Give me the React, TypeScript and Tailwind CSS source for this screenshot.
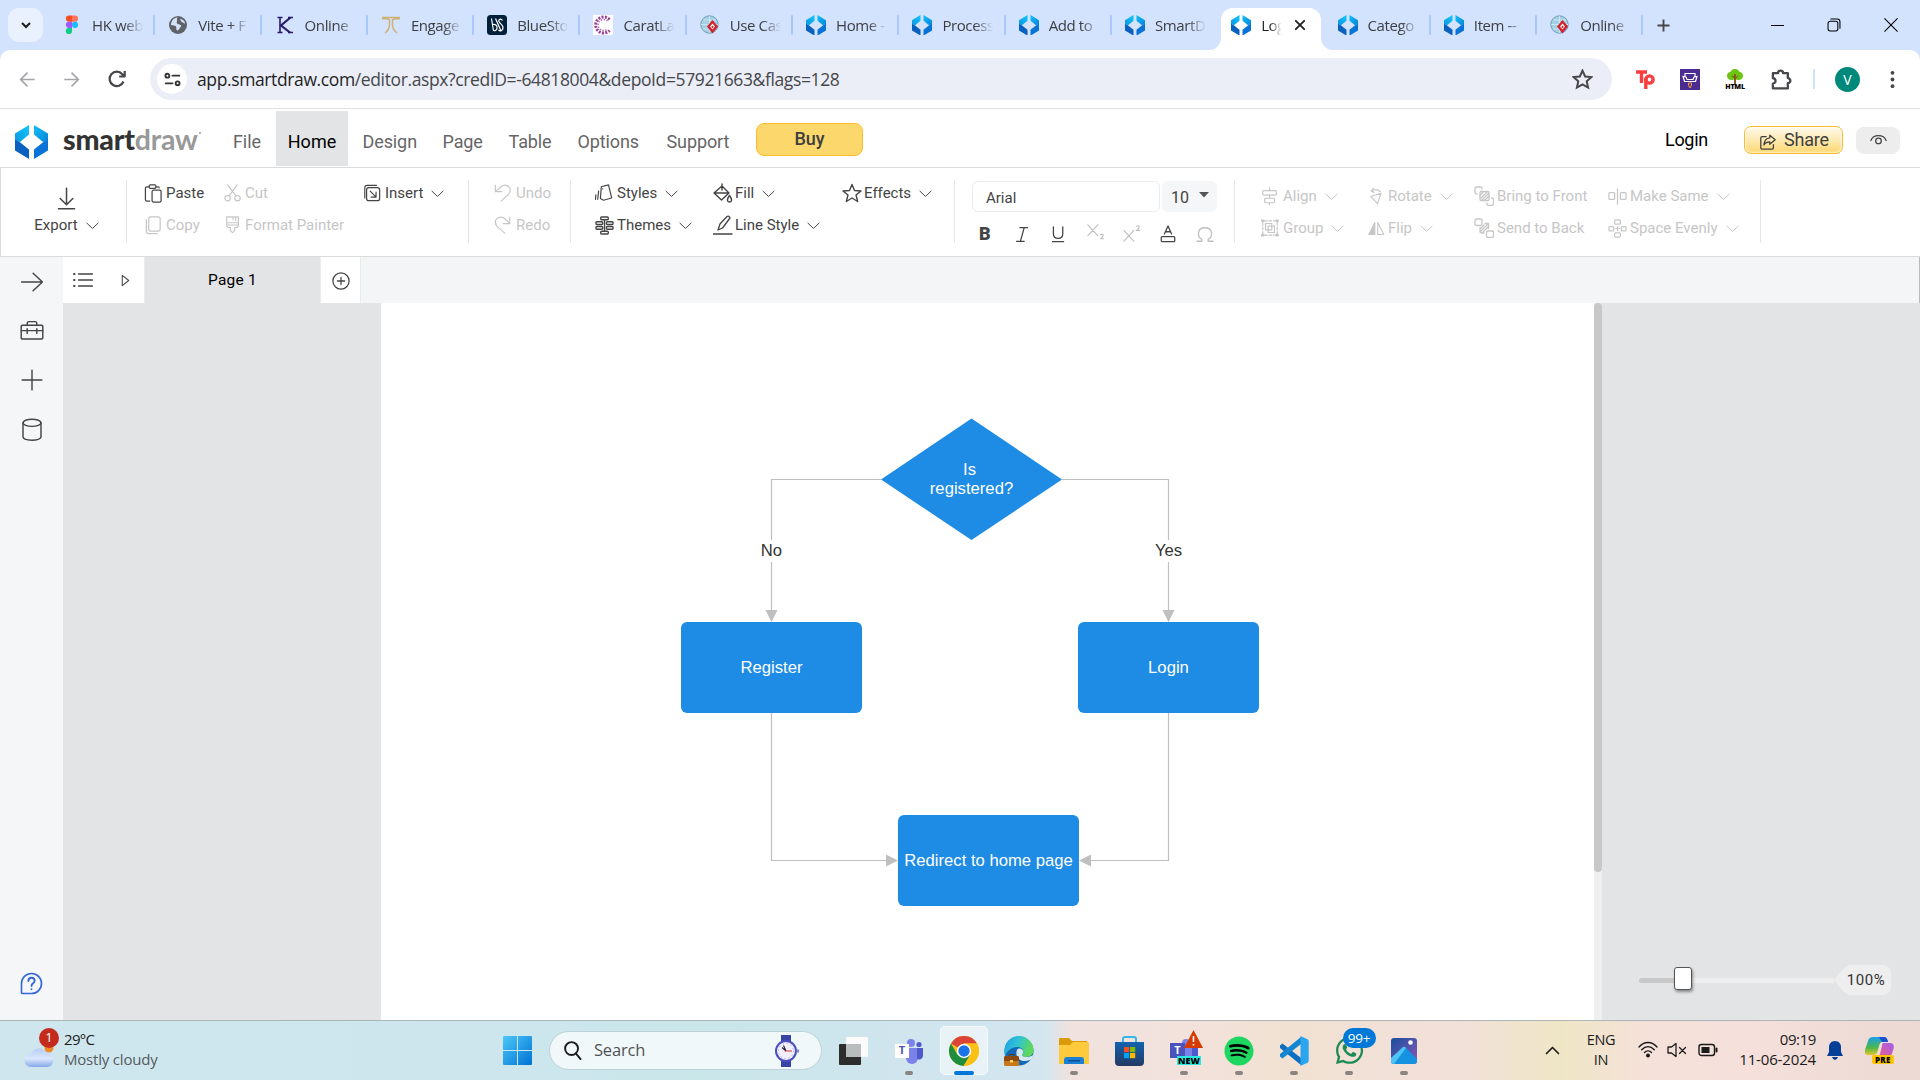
import React from "react";
import { FaWhatsapp, FaSpotify } from "react-icons/fa6";

type IconProps = { children?: React.ReactNode; s?: number; w?: number; sw?: number; className?: string };

/* Line icon drawn on a 20-unit grid */
function Line({ children, s = 20, w, sw = 1.3, className = "" }: IconProps) {
  return (
    <svg width={w ?? s} height={s} viewBox={`0 0 ${((w ?? s) / s) * 20} 20`} fill="none" stroke="currentColor" strokeWidth={sw} strokeLinecap="round" strokeLinejoin="round" className={`shrink-0 ${className}`}>
      {children}
    </svg>
  );
}

function SmartDrawMark({ s = 21 }: { s?: number }) {
  return (
    <svg width={s} height={(s * 34) / 33} viewBox="0 0 33 34" className="shrink-0">
      <defs>
        <linearGradient id="sdTop" x1="0" y1="1" x2="1" y2="0"><stop offset="0" stopColor="#0a95e0" /><stop offset="1" stopColor="#12c8fb" /></linearGradient>
        <linearGradient id="sdTopR" x1="0" y1="0" x2="1" y2="1"><stop offset="0" stopColor="#10c2fa" /><stop offset="1" stopColor="#0583d8" /></linearGradient>
      </defs>
      <path d="M0 14 L4 16.500 L14 24.500 V34 L0 25.500 Z" fill="#0960be" />
      <path d="M33 14 L29 16.500 L19 24.500 V34 L33 25.500 Z" fill="#0873d6" />
      <path d="M0 8.500 L14 0 V9.500 L5 17 L0 15 Z" fill="url(#sdTop)" />
      <path d="M33 8.500 L19 0 V9.500 L28 17 L33 15 Z" fill="url(#sdTopR)" />
    </svg>
  );
}

function Figma() {
  return (
    <svg width="20" height="20" viewBox="0 0 20 20">
      <path d="M10 0.5H7a3.1 3.1 0 0 0 0 6.2h3z" fill="#f24e1e" />
      <path d="M10 0.5h3a3.1 3.1 0 0 1 0 6.2h-3z" fill="#ff7262" />
      <path d="M10 6.7H7a3.1 3.1 0 0 0 0 6.2h3z" fill="#a259ff" />
      <circle cx="13" cy="9.8" r="3.1" fill="#1abcfe" />
      <path d="M7 12.9h3V16a3.1 3.1 0 1 1-3-3.1z" fill="#0acf83" />
    </svg>
  );
}
function Globe() {
  return (
    <svg width="20" height="20" viewBox="0 0 20 20">
      <circle cx="10" cy="10" r="9" fill="#5f6368" />
      <path d="M3 10c2 .5 4 .3 5 1.500.8 1-.3 2.500.7 3.500.8 1 2.300 0 2.800-1.500.4-1.400 2-1.500 1.500-3-.5-1.300-3-1-4-2C8 7.500 9.500 6 9 4.500 8.700 3.300 9 3 10 2.600 7 2.500 3 5 3 10z" fill="#d3e2fd" />
      <path d="M12 4c1 1 .5 2.500 2 3s2 1.500 3 1.800C17 6.500 15 4 12 4z" fill="#d3e2fd" />
    </svg>
  );
}
function KMark() {
  return (
    <svg width="20" height="20" viewBox="0 0 20 20" fill="none" stroke="#2a1a6e">
      <path d="M5 2.500v15M2.500 2.500h5M2.500 17.500h5" strokeWidth="1.600" />
      <path d="M15.500 2.500L6 10.500l9 7" strokeWidth="2.200" />
      <path d="M13 2.500h5M13 17.500h5" strokeWidth="1.500" />
    </svg>
  );
}
function Pillar() {
  return (
    <svg width="20" height="20" viewBox="0 0 20 20" fill="none" stroke="#cdb177" strokeWidth="1.500">
      <path d="M1 2.500h18M1 3.500c3 1 6-1 7.500 1.500v5c0 4-2 6-4.500 8M19 3.500c-3 1-6-1-7.500 1.500v5c0 4 2 6 4.500 8" />
    </svg>
  );
}
function BlueStone() {
  return (
    <svg width="20" height="20" viewBox="0 0 20 20">
      <rect width="20" height="20" rx="3.500" fill="#03203a" />
      <path d="M4.500 3.500l2 12.500M6 9.500c5-1 5.500 5.500 1 6.500M8.500 3.500L14 16M15.500 5.500c-1.500-2.500-4.500-1-3.500 1.200s4 3 4 6-3 4-4.500 2.300" fill="none" stroke="#fff" strokeWidth="1.200" />
    </svg>
  );
}
function CaratLane() {
  return (
    <svg width="20" height="20" viewBox="0 0 20 20">
      <rect width="20" height="20" fill="#fff" />
      <path d="M16.500 4.500A8 8 0 1 0 16.500 15.500" fill="none" stroke="#9b3f97" strokeWidth="3" strokeDasharray="2 1.300" />
      <path d="M14.500 6A5.500 5.500 0 1 0 14.500 14" fill="none" stroke="#b569b0" strokeWidth="1.500" strokeDasharray="1.300 1.500" />
    </svg>
  );
}
function Paradigm() {
  return (
    <svg width="20" height="20" viewBox="0 0 20 20">
      <circle cx="9.500" cy="9.500" r="8.700" fill="#a5cfe4" stroke="#6f9fba" />
      <path d="M9.500 1v17M1 9.500h17M3 5h13M3 14h13" stroke="#d4ebf5" strokeWidth=".8" fill="none" />
      <path d="M12.500 5l5.500 6.500-5.500 7-5.500-7z" fill="#d3222a" />
      <path d="M12.500 8.500l2.500 3-2.500 3-2.500-3z" fill="#fff" />
      <path d="M12.500 10.500l1.300 1.400-1.300 1.400-1.300-1.400z" fill="#d3222a" />
    </svg>
  );
}

const sd = <SmartDrawMark s={20} />;
const tabs: { icon: React.ReactNode; title: string; active?: boolean; last?: boolean }[] = [
  { icon: <Figma />, title: "HK web" },
  { icon: <Globe />, title: "Vite + F" },
  { icon: <KMark />, title: "Online" },
  { icon: <Pillar />, title: "Engage" },
  { icon: <BlueStone />, title: "BlueSto" },
  { icon: <CaratLane />, title: "CaratLa" },
  { icon: <Paradigm />, title: "Use Cas" },
  { icon: sd, title: "Home -" },
  { icon: sd, title: "Process" },
  { icon: sd, title: "Add to" },
  { icon: sd, title: "SmartD", last: true },
  { icon: sd, title: "Log", active: true },
  { icon: sd, title: "Catego" },
  { icon: sd, title: "Item --" },
  { icon: <Paradigm />, title: "Online" },
];

function TabStrip() {
  return (
    <div className="flex h-[50px] bg-[#d3e2fd] text-[#3c4043]">
      <div className="ml-2 mt-2 flex h-[34px] w-[35px] items-center justify-center rounded-[11px] bg-[#e9f0fe]">
        <Line s={16} sw={2.600} className="text-[#1f1f1f]"><path d="M5 7.500l5 5 5-5" strokeLinecap="butt" strokeLinejoin="miter" /></Line>
      </div>
      <div className="ml-[6px] flex">
        {tabs.map((t, i) =>
          t.active ? (
            <div key={i} className="relative flex w-[106.300px] items-center pt-2 text-[#1f1f1f]">
              <div className="absolute bottom-0 left-[3px] right-[4px] top-[8px] rounded-t-[12px] bg-white" />
              <svg className="absolute -left-[9px] bottom-0" width="12" height="12"><path d="M12 0v12H0A12 12 0 0 0 12 0z" fill="#fff" /></svg>
              <svg className="absolute -right-[8px] bottom-0" width="12" height="12"><path d="M0 0v12h12A12 12 0 0 1 0 0z" fill="#fff" /></svg>
              <div className="relative -mt-2 ml-[13px] flex items-center">
                {t.icon}
                <div className="ml-[10px] w-[23px] whitespace-nowrap text-[15px] tracking-[-0.600px] [mask-image:linear-gradient(to_right,black_40%,transparent_90%)]">{t.title}</div>
                <Line s={12} sw={3} className="ml-[10px]"><path d="M3 3l14 14M17 3L3 17" /></Line>
              </div>
            </div>
          ) : (
            <div key={i} className="flex w-[106.300px] items-center">
              <div className="ml-[13px] flex w-[20px] justify-center">{t.icon}</div>
              <div className="ml-[10px] w-[54px] whitespace-nowrap text-[15px] tracking-[-0.400px] [mask-image:linear-gradient(to_right,black_60%,transparent_95%)]">{t.title}</div>
              {!t.last && <div className="ml-auto h-5 w-[2px] rounded bg-[#a8c7fa]" />}
            </div>
          ),
        )}
      </div>
      <div className="flex w-[41px] items-center justify-center">
        <Line s={15} sw={2.500} className="text-[#45474a]"><path d="M10 2v16M2 10h16" strokeLinecap="butt" /></Line>
      </div>
      <div className="ml-auto mr-[22px] flex items-center gap-[43px] text-black">
        <div className="h-px w-[13px] bg-black" />
        <Line s={14} sw={1.500}><rect x="1.500" y="4.500" width="14" height="14" rx="3" /><path d="M5.500 1.500h9a4 4 0 0 1 4 4v9" /></Line>
        <Line s={14} sw={1.500}><path d="M1 1l18 18M19 1L1 19" /></Line>
      </div>
    </div>
  );
}

function AddressBar() {
  return (
    <div className="bg-[#d3e2fd]">
      <div className="flex h-[59px] items-center rounded-t-[10px] border-b border-[#dfe0e2] bg-white">
        <div className="flex w-[150px] items-center pl-[19px] text-[#a4a6a9]">
          <Line s={17} sw={2}><path d="M18.500 10H2M10 2L2 10l8 8" strokeLinecap="butt" strokeLinejoin="miter" /></Line>
          <Line s={17} sw={2} className="ml-[27px]"><path d="M1.500 10H18M10 2l8 8-8 8" strokeLinecap="butt" strokeLinejoin="miter" /></Line>
          <Line s={20} sw={2.200} className="ml-[27px] text-[#45474a]"><path d="M16.500 12.500A7.200 7.200 0 1 1 15.300 5.200l2 2M17.700 2v5.500h-5.500" strokeLinecap="butt" /></Line>
        </div>
        <div className="flex h-[42px] w-[1462px] items-center rounded-full bg-[#ebeef7] pl-[7px] pr-[19px]">
          <div className="flex h-[30px] w-[30px] items-center justify-center rounded-full bg-white">
            <Line s={17} sw={2.200} className="text-[#333]"><circle cx="4" cy="5.500" r="2.300" /><path d="M10 5.500h8M2 14.500h8" /><circle cx="16" cy="14.500" r="2.300" /></Line>
          </div>
          <div className="ml-[10px] whitespace-nowrap text-[17.500px] tracking-[-0.380px] text-[#45474b]">
            <span className="text-[#1f1f1f]">app.smartdraw.com</span>/editor.aspx?credID=-64818004&amp;depoId=57921663&amp;flags=128
          </div>
          <Line s={21} sw={1.900} className="ml-auto text-[#45474a]"><path d="M10 1.500l2.500 5.600 6 .6-4.500 4 1.300 6L10 14.600 4.700 17.700l1.300-6-4.500-4 6-.6z" strokeLinejoin="miter" /></Line>
        </div>
        <svg className="ml-[24px]" width="19" height="20" viewBox="0 0 19 20" fill="none" stroke="#f83f3f" strokeWidth="3.400">
          <path d="M0 3h11M5.500 3v11" /><circle cx="13.500" cy="10.500" r="3.600" /><path d="M9.800 9v11" />
        </svg>
        <svg className="ml-[25px]" width="20" height="21" viewBox="0 0 20 21"><rect width="20" height="21" fill="#4d2c91" /><path d="M5 8V4.500h10V8M3 7.500l1.500 5h11l1.500-5-3 .5-1 2.500H7L6 8z" fill="none" stroke="#fff" strokeWidth="1.200" /><path d="M8.500 14h3v2L10 19l-1.500-3z" fill="none" stroke="#e9a23b" /></svg>
        <div className="ml-[24px] flex w-[22px] flex-col items-center">
          <svg width="18" height="16" viewBox="0 0 18 16"><path d="M9 0c3 0 4 1.500 4.500 3C16 3 17 5 17 7c0 3-3 4.500-5.500 4L9 10l-2.500 1C4 11.500 1 10 1 7c0-2 1-4 3.500-4C5 1.500 6 0 9 0z" fill="#6cc611" /><path d="M8 16V9L5 7h3V5h2v3l3-2-3 4v6z" fill="#8a5a23" /></svg>
          <div className="-mt-px text-[7px] font-black leading-[6px] tracking-[-0.200px] text-black">HTML</div>
        </div>
        <Line s={23} sw={2} className="ml-[24px] text-[#45474a]"><path d="M2.500 4.500H7a2.200 2.200 0 1 1 4.400 0h4.100v4.300a2.200 2.200 0 1 1 0 4.400v4.600h-13v-4.300a2.300 2.300 0 0 0 0-4.600z" /></Line>
        <div className="ml-[20px] h-5 w-[2px] bg-[#cfe0fc]" />
        <div className="ml-[20px] flex h-[25px] w-[25px] items-center justify-center rounded-full bg-[#00897b] text-[14px] text-white">V</div>
        <Line s={19} sw={0} className="ml-[23px] text-[#45474a]"><circle cx="10" cy="3" r="2" fill="currentColor" /><circle cx="10" cy="10" r="2" fill="currentColor" /><circle cx="10" cy="17" r="2" fill="currentColor" /></Line>
      </div>
    </div>
  );
}

function AppHeader() {
  return (
    <div className="flex h-[59px] items-start border-b border-[#dbdbdb] bg-white text-[18px] text-[#666]">
      <div className="flex h-[58px] w-[218px] items-center pl-[15px]">
        <div className="mt-[8px]"><SmartDrawMark s={33} /></div>
        <div className="ml-[15px] mt-[2px] whitespace-nowrap font-['Lato'] text-[28.500px] font-black leading-none tracking-[-0.200px] text-[#333]">smart<span className="font-bold text-[#999]">draw</span></div>
        <div className="mb-[10px] ml-px h-[2px] w-[2px] shrink-0 rounded-full bg-[#999]" />
      </div>
      <div className="mt-[2px] flex h-[55px] w-[58px] items-center justify-center pt-[6px]">File</div>
      <div className="mt-[2px] flex h-[55px] w-[72px] items-center justify-center bg-[#e2e4e6] pt-[6px] text-black">Home</div>
      <div className="mt-[2px] flex h-[55px] items-center pt-[6px] tracking-[-0.100px]">
        <span className="ml-[14.500px] w-[80px]">Design</span>
        <span className="w-[66px]">Page</span>
        <span className="w-[69px]">Table</span>
        <span className="w-[89px]">Options</span>
        <span className="w-[89.500px]">Support</span>
      </div>
      <div className="mt-[14px] flex h-[33px] w-[107px] items-center justify-center rounded-[8px] border border-[#ffbd2e] bg-[#fcd76c] pb-[2px] font-medium text-[#3f3f3f]">Buy</div>
      <div className="ml-auto mt-[17px] flex h-[28px] items-center">
        <span className="w-[79px] pb-[2px] tracking-[-0.300px] text-black">Login</span>
        <div className="flex h-[28px] w-[99px] items-center rounded-[7px] border border-[#ffb92e] bg-gradient-to-b from-[#fffaec] to-[#fcd76c] pl-[14px] text-[#3f3f3f] shadow-[inset_0_0_2px_1px_rgba(255,255,255,0.700)]">
          <Line s={18} sw={1.400} className="mt-1"><path d="M8 4H3.500Q2 4 2 5.500v11Q2 18 3.500 18h11q1.500 0 1.500-1.500V13" /><path d="M12 2.500l6 5-6 5V9.800c-3 0-5 1-6.500 3.500C5.800 8.500 8 5.600 12 5.300z" /></Line>
          <span className="ml-[7px] pb-px tracking-[-0.200px]">Share</span>
        </div>
        <div className="ml-[13px] mr-[20px] flex h-[27px] w-[44px] items-center justify-center rounded-[8px] bg-[#ededed] text-[#444]">
          <Line s={17} sw={1.500}><path d="M1 10C4 2.500 16 2.500 19 10" /><circle cx="10" cy="10.500" r="3.300" /></Line>
        </div>
      </div>
    </div>
  );
}

const Chevron = () => <Line s={13} sw={1.500} className="ml-[8px]"><path d="M1 6l9 8.500L19 6" strokeLinecap="butt" /></Line>;

function Cmd({ icon, label, drop, off, iw = "w-[22px]" }: { icon: React.ReactNode; label: string; drop?: boolean; off?: boolean; iw?: string }) {
  return (
    <div className={`flex h-[32px] items-center whitespace-nowrap ${off ? "text-[#c6c6c6]" : "text-[#444]"}`}>
      <div className={`flex shrink-0 ${iw}`}>{icon}</div>
      <span>{label}</span>
      {drop && <Chevron />}
    </div>
  );
}

const Divider = () => <div className="mt-3 h-[63px] w-px shrink-0 bg-[#e6e6e6]" />;

const ic = {
  paste: <Line s={19}><path d="M5 3H3Q1.500 3 1.500 4.500v12Q1.500 18 3 18h3M13 3h2q1 0 1 1" /><rect x="5.500" y="1" width="7" height="3.500" rx="1.200" /><rect x="8.500" y="6.500" width="9.500" height="12.500" rx="1.500" /></Line>,
  copy: <Line s={19}><rect x="5" y="1" width="12" height="15" rx="2" /><path d="M2.500 4v12q0 2.500 2.500 2.500h9" /></Line>,
  cut: <Line s={18}><path d="M4 1l9.500 12.500M14.500 1L5.500 13.500" /><circle cx="4" cy="15.800" r="3" /><circle cx="15" cy="15.800" r="3" /></Line>,
  painter: <Line s={18}><path d="M3 1h13v9H3zM3 7.500h13M3 10q0 3 4 3v3l2.500 2.500L12 16v-3q4 0 4-3M10 1v3M13 1v4" /></Line>,
  insert: <Line s={18}><rect x="4" y="4" width="14.500" height="14.500" rx="2.500" /><path d="M2 15.500V4Q2 1.500 4.500 1.500H15M8 8l6 6M14.500 9v5.500H9" /></Line>,
  undo: <Line s={18}><path d="M1.500 1.500v7h7M1.500 8.500L8 3c4-3.500 10-1 10 4 0 3-2 5-4 6.500L8 19" /></Line>,
  redo: <Line s={18}><path d="M17.500 1.500v7h-7M17.500 8.500L12 3C8 -.5 1.500 1.500 1.500 7c0 3 2 5 4 6.500L12 19" /></Line>,
  styles: <Line s={18}><path d="M7 3l8-2 3.500 14.500-9 2.500L6 16z" /><path d="M4 8l-1 9M1 12l-.5 5M8.500 5.500h.1" /></Line>,
  themes: <Line s={19} sw={1.500}><rect x="6" y="1" width="8" height="3" rx="1" /><rect x="6" y="16" width="8" height="3" rx="1" /><rect x="1" y="6" width="7" height="3" rx="1" /><rect x="1" y="11" width="7" height="3" rx="1" /><rect x="12" y="6" width="7" height="3" rx="1" /><rect x="12" y="11" width="7" height="3" rx="1" /><path d="M10 4v12" /></Line>,
  fill: <Line s={20} sw={1.400}><path d="M9 1v6M9 3l7 7-7.500 7L1 10zM1.500 10h14" /><path d="M16.500 12.500c-3 4-2.500 6.500 0 6.500s3-2.500 0-6.500z" /></Line>,
  line: <Line s={20}><path d="M0 19h19M5 15l2-6 7-7.500q2-1 3 1.500L9.500 13z" /></Line>,
  star: <Line s={20} sw={1.400}><path d="M10 1.500l2.500 6 6.500.5-5 4 1.700 6.500L10 15l-5.700 3.500L6 12 1 8l6.500-.5z" /></Line>,
  align: <Line s={18}><rect x="2" y="4" width="15" height="5" rx="1" /><rect x="4" y="12.500" width="11" height="5" rx="1" /><path d="M9.500 1v3M9.500 9v3.500M9.500 17.500V20" /></Line>,
  group: <Line s={18}><path d="M4 2h12M2 4v12M4 18h12M18 4v12" strokeDasharray="3 2" /><rect x="5" y="5" width="7" height="7" /><rect x="8" y="8" width="7" height="7" /><path d="M1.500 2h1M17.500 2h1M1.500 18h1M17.500 18h1" strokeWidth="3" /></Line>,
  rotate: <Line s={18}><path d="M3 10.500L14.500 7l-4 11.500zM3.500 4.500C7 2.500 11 2.500 13.500 5M6 1.500l-2.500 3L7 6" /></Line>,
  flip: <Line s={17}><path d="M8 3v14H1z" fill="currentColor" /><path d="M11.500 3v14h7z" /></Line>,
  front: <Line s={20}><rect x="6" y="5.500" width="9" height="9" rx="1" /><path d="M7 12l6-6M8 14l6.500-6.500M6.500 9L9 6M11 14l4-4M3 8Q1 8 1 6V3Q1 1 3 1h4q1 0 1 2M13 17v1q0 1.500 2 1.500h2.500q2 0 2-2V14q0-2-2-2" /></Line>,
  back: <Line s={20}><rect x="1" y="1" width="7" height="6.500" rx="1.500" /><rect x="12.500" y="13" width="7" height="6.500" rx="1.500" /><path d="M6 10v3q0 2 2 2h2M11 5.500h3.500v5M7 13l7-7M9 14l6-6M6.500 10.500L10 7" /></Line>,
  same: <Line s={19}><rect x="1" y="6" width="6" height="7" rx="1" /><rect x="13" y="6" width="6" height="7" rx="1" /><path d="M10 2v16" /></Line>,
  space: <Line s={19}><rect x="7" y="1" width="6" height="4.500" rx="1" /><rect x="7" y="14.500" width="6" height="4.500" rx="1" /><rect x="1" y="8" width="5" height="4.500" rx="1" /><rect x="14" y="8" width="5" height="4.500" rx="1" /><path d="M8 10h4M10 8v4" /></Line>,
};

function Ribbon() {
  return (
    <div className="flex h-[89px] shrink-0 items-start border-b border-l border-[#dbdbdb] bg-white text-[15px]">
      <div className="flex w-[125px] flex-col items-center pl-[6px] pt-[19px] text-[#444]">
        <Line s={23} sw={1.300}><path d="M10 1v14M4.500 10l5.500 5.500 5.500-5.500M3 19h14" /></Line>
        <div className="mt-[3px] flex items-center leading-[24px]"><span>Export</span><Chevron /></div>
      </div>
      <Divider />
      <div className="ml-[17px] w-[80px] pt-[9px]"><Cmd icon={ic.paste} label="Paste" /><Cmd icon={ic.copy} label="Copy" off /></div>
      <div className="w-[139px] pt-[9px]"><Cmd iw="w-[21px]" icon={ic.cut} label="Cut" off /><Cmd iw="w-[21px]" icon={ic.painter} label="Format Painter" off /></div>
      <div className="w-[105px] pt-[9px]"><Cmd icon={ic.insert} label="Insert" drop /></div>
      <Divider />
      <div className="ml-[25px] w-[76px] pt-[9px]"><Cmd icon={ic.undo} label="Undo" off /><Cmd icon={ic.redo} label="Redo" off /></div>
      <Divider />
      <div className="ml-[24px] w-[118px] pt-[9px]"><Cmd icon={ic.styles} label="Styles" drop /><Cmd icon={ic.themes} label="Themes" drop /></div>
      <div className="w-[129px] pt-[9px]"><Cmd icon={ic.fill} label="Fill" drop /><Cmd icon={ic.line} label="Line Style" drop /></div>
      <div className="w-[112px] pt-[9px]"><Cmd icon={ic.star} label="Effects" drop /></div>
      <Divider />
      <div className="ml-[17px] w-[262px] pt-[13px] text-[#444]">
        <div className="flex gap-[2px]">
          <div className="flex h-[31px] w-[188px] items-center rounded-[6px] border border-[#ebebeb] pl-[13px] pt-[4px]">Arial</div>
          <div className="flex h-[31px] w-[55px] items-center rounded-[6px] bg-[#f4f6f8] pl-[9px] pt-[2px] text-[16px]">10
            <svg className="-mt-[5px] ml-[10px]" width="10" height="6"><path d="M0 0h10L5 5.500z" fill="#555" /></svg>
          </div>
        </div>
        <div className="mt-[10px] flex h-[24px] items-center">
          <span className="ml-[7px] w-[35px] text-[18px] font-black leading-none">B</span>
          <Line s={17} sw={1.500} className="mr-[19px]"><path d="M7 2h9M3 18h9M12 2L7.500 18" /></Line>
          <Line s={17} sw={1.500} className="mr-[20px]"><path d="M4 1v8q0 5.500 5.500 5.500T15 9V1M3 18.500h13" /></Line>
          <Line s={18} sw={1.300} className="mb-[4px] mr-[18px] text-[#c0c0c0]"><path d="M1 2l11 12M12 2L1 14M15 13q3-1.500 3 .5t-3 4h3.500" /></Line>
          <Line s={18} sw={1.300} className="mr-[18px] text-[#c0c0c0]"><path d="M1 6l11 12M12 6L1 18M15 1.500q3-1.500 3 .5t-3 4h3.500" /></Line>
          <Line s={18} sw={1.400} className="mr-[19px]"><path d="M6 10l4-9 4 9M7.500 7.500h5" /><rect x="2.500" y="13" width="15" height="5.500" rx="1" /></Line>
          <Line s={18} sw={1.500} className="text-[#c0c0c0]"><path d="M1 18h5.500v-2C1 13 1 3 10 3s9 10 3.500 13v2H19" /></Line>
        </div>
      </div>
      <Divider />
      <div className="ml-[26px] w-[107px] pt-[12px]"><Cmd icon={ic.align} label="Align" drop off /><Cmd icon={ic.group} label="Group" drop off /></div>
      <div className="w-[106px] pt-[12px]"><Cmd iw="w-[20px]" icon={ic.rotate} label="Rotate" drop off /><Cmd iw="w-[20px]" icon={ic.flip} label="Flip" drop off /></div>
      <div className="w-[134px] pt-[12px]"><Cmd iw="w-[23px]" icon={ic.front} label="Bring to Front" off /><Cmd iw="w-[23px]" icon={ic.back} label="Send to Back" off /></div>
      <div className="w-[152px] pt-[12px]"><Cmd icon={ic.same} label="Make Same" drop off /><Cmd icon={ic.space} label="Space Evenly" drop off /></div>
      <Divider />
    </div>
  );
}

function PageBar() {
  return (
    <div className="flex h-[46px] shrink-0 border-r border-[#bbb] bg-[#f4f5f7] text-[#444]">
      <div className="flex w-[81px] items-center bg-white pl-[10px]">
        <Line s={20} sw={1.300}><path d="M5.500 4h14M5.500 10h14M5.500 16h14" /><path d="M1 4h.5M1 10h.5M1 16h.5" strokeWidth="2" /></Line>
        <Line s={13} sw={1.600} className="ml-[26px]"><path d="M5 2v16l10-8z" /></Line>
      </div>
      <div className="flex w-[177px] items-center justify-center border-x border-[#ececec] bg-[#e2e4e6] pt-[2px] text-[15.500px] tracking-[0.200px] text-black">Page 1</div>
      <div className="flex w-[40px] items-center justify-center border-r border-[#eaeaea] bg-white pt-px">
        <Line s={18} sw={1.400}><circle cx="10" cy="10" r="9" /><path d="M6 10h8M10 6v8" /></Line>
      </div>
    </div>
  );
}

function Sidebar() {
  return (
    <div className="flex w-[63px] shrink-0 flex-col items-center bg-[#f4f6f8] text-[#444]">
      <Line s={22} sw={1.300} className="mt-[14px]"><path d="M0.500 10H19M11 2l8.500 8-8.500 8" /></Line>
      <Line s={24} sw={1.200} className="mt-[25px]"><rect x="1" y="6" width="18" height="11.500" rx="1" /><path d="M6 6V4.500q0-1.500 1.500-1.500h5Q14 3 14 4.500V6M1 10.500h18M6 9v4M14 9v4" /></Line>
      <Line s={22} sw={1.300} className="mt-[27px]"><path d="M10 1v18M1 10h18" /></Line>
      <Line s={24} sw={1.200} className="mt-[27px]"><ellipse cx="10" cy="4" rx="7.500" ry="3" /><path d="M2.500 4v11.500c0 4 15 4 15 0V4" /></Line>
      <Line s={25} sw={1.300} className="mb-[24px] mt-auto text-[#3468d8]"><path d="M2 17.500V10a8 8 0 1 1 8 8H2.500z" /><path d="M7.500 8c0-3.500 5-3.500 5 0 0 2-2.500 1.800-2.500 4M10 14.500v.1" strokeWidth="1.500" /></Line>
    </div>
  );
}

const node = "absolute flex items-center justify-center bg-[#1e8be5] rounded-[6px] text-white w-[181px] h-[91px]";

function Canvas() {
  return (
    <div className="flex min-h-0 flex-1 bg-[#e2e4e6]">
      <div className="relative ml-[318px] w-[1213px] shrink-0 bg-white font-['Liberation_Sans',Arial,sans-serif] text-[16.670px]">
        <svg className="absolute left-0 top-0" width="1213" height="717" fill="none">
          <g stroke="#bfbfbf" strokeWidth="1.200">
            <path d="M500 176.500H390.500V308M681 176.500H787.500V308M390.500 410V557.500H508M787.500 410V557.500H706" />
          </g>
          <g fill="#bfbfbf">
            <path d="M384.500 307h12l-6 12zM781.500 307h12l-6 12zM505 551.500v12l12-6zM710 551.500v12l-12-6z" />
          </g>
          <path d="M590.500 115.500L681 176.500 590.500 237 500 176.500z" fill="#1e8be5" />
        </svg>
        <div className="absolute left-[500px] top-[157px] w-[181px] text-center leading-[19px] text-white"><div className="pr-[4px]">Is</div>registered?</div>
        <div className="absolute left-[365.500px] top-[237px] w-[50px] bg-white text-center leading-[22px] text-[#333]">No</div>
        <div className="absolute left-[762.500px] top-[237px] w-[50px] bg-white text-center leading-[22px] text-[#333]">Yes</div>
        <div className={`${node} left-[300px] top-[318.500px]`}>Register</div>
        <div className={`${node} left-[697px] top-[318.500px]`}>Login</div>
        <div className={`${node} left-[517px] top-[512px] whitespace-nowrap`}>Redirect to home page</div>
      </div>
      <div className="w-[8px] shrink-0 bg-[#efefef]"><div className="h-[569px] w-[8px] rounded-full bg-[#c8c8c8]" /></div>
      <div className="flex flex-1 items-end pb-[25px] pl-[37px]">
        <div className="relative flex h-[30px] items-center">
          <div className="h-[5px] w-[37px] rounded-l-full bg-[#c8c8c8]" />
          <div className="h-[5px] w-[158px] bg-[#eeeeee]" />
          <div className="absolute left-[35px] top-[2px] h-[23px] w-[18px] rounded-[3px] border border-[#555] bg-white shadow-[1px_2px_3px_rgba(0,0,0,0.400)]" />
          <div className="flex h-[30px] w-[57px] items-center justify-center rounded-r-[8px] bg-[#eeeeee] pl-[7px] text-[15px] tracking-[0.600px] text-[#333] [clip-path:polygon(0_50%,10px_10%,16px_0,100%_0,100%_100%,16px_100%,10px_90%)]">100%</div>
        </div>
      </div>
    </div>
  );
}

/* ---------- taskbar ---------- */
function TeamsIcon() {
  return (
    <svg width="28" height="28" viewBox="0 0 28 28">
      <circle cx="16" cy="6" r="4" fill="#7b83eb" /><circle cx="24" cy="7.500" r="2.600" fill="#5059c9" />
      <path d="M11 11h12v10a6 6 0 0 1-12 0z" fill="#7b83eb" /><path d="M22 11h6v8a4 4 0 0 1-6 3z" fill="#5059c9" />
    </svg>
  );
}
function Chrome() {
  return (
    <svg width="30" height="30" viewBox="0 0 30 30">
      <circle cx="15" cy="15" r="15" fill="#fbc116" />
      <path d="M15 15L2 7.500A15 15 0 0 1 28 7.500H15z" fill="#db4437" />
      <path d="M2 7.500A15 15 0 0 0 14.500 30L21.500 18.500 15 15 8.500 18.700z" fill="#1e8e3e" />
      <path d="M28 7.500H15v4l6.500 7L14.800 30A15 15 0 0 0 28 7.500z" fill="#fbc116" />
      <circle cx="15" cy="15" r="7.200" fill="#fff" /><circle cx="15" cy="15" r="5.700" fill="#1a73e8" />
    </svg>
  );
}
function Edge() {
  return (
    <svg width="30" height="30" viewBox="0 0 30 30">
      <defs>
        <linearGradient id="edge" x1="0" y1="0" x2="1" y2="0.300"><stop offset="0" stopColor="#1e9de0" /><stop offset=".5" stopColor="#2fc3d6" /><stop offset="1" stopColor="#5fd85a" /></linearGradient>
      </defs>
      <circle cx="15" cy="15" r="14.500" fill="#1368b8" />
      <path d="M.5 15A14.500 14.500 0 0 1 29.500 14c0 5-4 7-8 7-3 0-4-1.500-3-3 2-3-.5-7-5-7C7 11 2 16 1 20 .6 18 .5 16.500.5 15z" fill="url(#edge)" />
      <path d="M13 14c-2 5 1 11 8 11 3 0 6-1 7.500-2.500L29 19c-2 1.500-4.500 2-7.500 2-3 0-4-1.500-3-3 .8-1.200.8-2.500.2-3.800C17 12 14 12 13 14z" fill="#d6e8ef" />
      <rect x="0" y="20" width="15" height="10" rx="1.500" fill="#c87818" /><path d="M0 21.500q0-1.500 1.500-1.500h12q1.500 0 1.500 1.500V25H0z" fill="#8a4a12" /><path d="M5 20v-1.500h5V20" stroke="#6b3910" fill="none" /><rect x="6" y="24" width="3" height="2.500" fill="#ffd25e" />
    </svg>
  );
}
function Folder() {
  return (
    <svg width="30" height="28" viewBox="0 0 30 28">
      <path d="M0 2Q0 1 1 1h9l3 3h15v6H0z" fill="#d99b0a" /><path d="M0 8h11l3-3h15q1 0 1 1v20q0 1-1 1H1q-1 0-1-1z" fill="#ffcb3d" />
      <path d="M5 27v-4q0-3 3-3h14q3 0 3 3v4z" fill="#1b7fd4" /><rect x="9" y="23" width="12" height="1.500" fill="#0d4f93" />
    </svg>
  );
}
function Store() {
  return (
    <svg width="29" height="30" viewBox="0 0 29 30">
      <defs><linearGradient id="st" x1="0" y1="0" x2="0" y2="1"><stop offset="0" stopColor="#1263b0" /><stop offset="1" stopColor="#233a63" /></linearGradient></defs>
      <path d="M8 7V3q0-2 2-2h9q2 0 2 2v4" fill="none" stroke="#37b6ea" strokeWidth="2" />
      <path d="M0 6h29v20q0 4-4 4H4q-4 0-4-4z" fill="url(#st)" />
      <rect x="9" y="11" width="5.200" height="5.200" fill="#f25022" /><rect x="15" y="11" width="5.200" height="5.200" fill="#7fba00" /><rect x="9" y="17" width="5.200" height="5.200" fill="#00a4ef" /><rect x="15" y="17" width="5.200" height="5.200" fill="#ffb900" />
    </svg>
  );
}
function CodeMark() {
  return (
    <svg width="30" height="30" viewBox="0 0 30 30">
      <path d="M1 9.500l2.500-2L22 22v7L1 12z" fill="#0a6fc0" />
      <path d="M1 20.500l2.500 2L22 8V1L1 18z" fill="#1485d0" />
      <path d="M21.500 0l7 3.200q1.200.6 1.200 2v19.600q0 1.400-1.200 2L21.500 30z" fill="#2ba5ee" />
    </svg>
  );
}
function Photos() {
  return (
    <svg width="26" height="26" viewBox="0 0 26 26">
      <defs><linearGradient id="ph" x1="0" y1="0" x2="1" y2="1"><stop offset="0" stopColor="#174f9c" /><stop offset="1" stopColor="#8d57b8" /></linearGradient></defs>
      <rect width="26" height="26" rx="3" fill="url(#ph)" /><path d="M0 23L12 10q1.500-1.500 3 0L26 21v2q0 3-3 3H3q-3 0-3-3z" fill="#1592e0" /><path d="M0 20L12 9q2-1 3 1L3 26Q0 26 0 23z" fill="#4fc5f5" /><circle cx="19.500" cy="4.500" r="2.300" fill="#fff" />
    </svg>
  );
}
function Watch() {
  return (
    <svg width="26" height="32" viewBox="0 0 26 32">
      <path d="M8 0h10v32H8z" fill="#3a44a8" /><circle cx="13" cy="16" r="11" fill="#4a4fc0" /><circle cx="13" cy="16" r="9" fill="#f1effb" />
      <rect x="23.500" y="14.500" width="2.500" height="3" fill="#7f84d8" /><path d="M13 16l-2.500-5.500M13 16l-4-3.500" stroke="#223" strokeWidth="1.100" /><path d="M12 16h7" stroke="#d33" />
      <circle cx="13" cy="16" r="7.500" fill="none" stroke="#9a9be0" strokeDasharray="1 3" />
    </svg>
  );
}

function Slot({ children, dot, active }: { children: React.ReactNode; dot?: boolean; active?: boolean }) {
  return (
    <div className="relative flex w-[55px] items-center justify-center">
      {active && <div className="absolute top-[5px] h-[49px] w-[48px] rounded-[5px] border border-white/60 bg-[#e9f2f7]" />}
      <div className="relative">{children}</div>
      {dot && <div className="absolute bottom-[5px] h-[4px] w-[8px] rounded-full bg-[#8a8583]" />}
      {active && <div className="absolute bottom-[5px] h-[4px] w-[20px] rounded-full bg-[#0078d7]" />}
    </div>
  );
}

function Taskbar() {
  return (
    <div className="flex h-[60px] shrink-0 border-t border-[#abb5b9] bg-[linear-gradient(to_right,#cfe6ee_0px,#cde6ee_500px,#c9e6e9_700px,#d0e5ee_900px,#d3e6f0_1045px,#f0e2de_1070px,#f3e2dc_1180px,#f1e1d2_1290px,#f2e0da_1450px,#efe6c6_1560px,#f5e1da_1650px,#f5e0db_1750px,#ecd9d3_1920px)] text-[#1b1b1b]">
      <div className="flex w-[503px] items-center pl-[24px]">
        <div className="relative w-[40px]">
          <svg width="32" height="24" viewBox="0 0 32 24" className="mt-[10px]">
            <defs><linearGradient id="cl" x1="0" y1="0" x2="0" y2="1"><stop offset="0" stopColor="#b5cdf8" /><stop offset=".55" stopColor="#dbe7fc" /><stop offset="1" stopColor="#83a9e8" /></linearGradient></defs>
            <circle cx="25" cy="4" r="4.500" fill="#f08a24" />
            <path d="M7 23a6.500 6.500 0 0 1 0-13A8.500 8.500 0 0 1 22 8a7.600 7.600 0 0 1 2 15z" fill="url(#cl)" />
          </svg>
          <div className="absolute left-[15px] top-[-6px] flex h-[20px] w-[20px] items-center justify-center rounded-full bg-[#c42b1c] text-[13px] text-white">1</div>
        </div>
        <div className="-mt-[3px] text-[15px] leading-[20px] tracking-[-0.200px]"><div className="tracking-[-0.700px]">29°C</div><div className="text-[#555c5f]">Mostly cloudy</div></div>
      </div>
      <div className="flex w-[29px] items-center">
        <svg width="29" height="29" viewBox="0 0 29 29">
          <defs><linearGradient id="win" x1="0" y1="0" x2="1" y2="1"><stop offset="0" stopColor="#4cc8f9" /><stop offset="1" stopColor="#0072d3" /></linearGradient></defs>
          <path d="M0 1q0-1 1-1h13v14H0zM15 0h13q1 0 1 1v13H15zM0 15h14v14H1q-1 0-1-1zM15 15h14v13q0 1-1 1H15z" fill="url(#win)" />
        </svg>
      </div>
      <div className="ml-[17px] mt-[10px] flex h-[39px] w-[273px] items-center rounded-full border border-[#bcd2d8] bg-[#f1f8fa] pl-[13px] pr-[22px]">
        <Line s={19} sw={2}><circle cx="9" cy="8" r="6.800" /><path d="M13.500 13l5 6" /></Line>
        <span className="ml-[12px] text-[16.500px] tracking-[-0.200px] text-[#505456]">Search</span>
        <div className="ml-auto"><Watch /></div>
      </div>
      <div className="ml-[4.500px] flex">
        <Slot><svg width="30" height="28" viewBox="0 0 30 28"><rect x="0" y="7" width="22" height="21" rx="1" fill="#2d2d2d" /><rect x="7" y="0" width="22" height="20" rx="1" fill="#fbfbfb" /><path d="M7 7h15v13H7z" fill="#b9bdbe" /></svg></Slot>
        <Slot dot>
          <TeamsIcon /><div className="absolute left-0 top-[7px] flex h-[14px] w-[14px] items-center justify-center bg-white text-[11px] font-bold text-[#4b53bc]">T</div>
        </Slot>
        <Slot active><Chrome /></Slot>
        <Slot><Edge /></Slot>
        <Slot dot><Folder /></Slot>
        <Slot><Store /></Slot>
        <Slot dot>
          <TeamsIcon />
          <div className="absolute left-0 top-[6px] flex h-[15px] w-[15px] items-center justify-center bg-[#4b53bc] text-[11px] font-bold text-white">T</div>
          <svg className="absolute left-[14px] top-[-7px]" width="19" height="18" viewBox="0 0 19 18"><path d="M9.500 0L19 18H0z" fill="#d83b01" /><path d="M9.500 6v6M9.500 14v1.500" stroke="#fff" strokeWidth="1.600" /></svg>
          <div className="absolute left-[7px] top-[19px] bg-[#2be8e0] px-px text-[9px] font-black leading-[9px] text-black">NEW</div>
        </Slot>
        <Slot dot><div className="relative h-[30px] w-[30px]"><div className="absolute inset-[3px] rounded-full bg-black" /><FaSpotify size={30} color="#1ed760" className="relative" /></div></Slot>
        <Slot dot><CodeMark /></Slot>
        <Slot dot>
          <FaWhatsapp size={31} color="#1c8a54" />
          <div className="absolute left-[9px] top-[-7px] flex h-[20px] w-[33px] items-center justify-center rounded-full bg-[#0078d7] text-[13.500px] tracking-[-0.300px] text-white">99+</div>
        </Slot>
        <Slot dot><Photos /></Slot>
      </div>
      <div className="ml-auto flex items-center pr-[24px]">
        <Line s={15} sw={2.200}><path d="M2 14l8-8 8 8" /></Line>
        <div className="-mt-px ml-[25px] w-[32px] text-center text-[14.500px] leading-[20px] tracking-[-0.300px]"><div>ENG</div><div>IN</div></div>
        <Line s={20} sw={1.400} className="-mt-[3px] ml-[21px]"><path d="M1 8c5-6 13-6 18 0M3.700 10.800c4-4.200 8.600-4.200 12.600 0M6.500 13.500c2-2.200 5-2.200 7 0" /><circle cx="10" cy="16.500" r="1.300" fill="currentColor" /></Line>
        <Line s={20} sw={1.300} className="-mt-[2px] ml-[9px]"><path d="M1 7h3.500L9 3.500v13L4.500 13H1zM12.500 7.500l6 6M18.500 7.500l-6 6" /></Line>
        <Line s={20} sw={1.400} className="-mt-[2px] ml-[11px]"><rect x="1" y="4.500" width="15.500" height="11" rx="2.500" /><rect x="3.500" y="7" width="8" height="6" fill="currentColor" stroke="none" /><path d="M18.500 8.500v3" strokeWidth="2" /></Line>
        <div className="-mt-[3px] ml-[20px] w-[78px] whitespace-nowrap text-right text-[15px] leading-[20px] tracking-[-0.150px]"><div className="tracking-[-0.400px]">09:19</div><div>11-06-2024</div></div>
        <svg className="ml-[11px]" width="16" height="19" viewBox="0 0 16 19"><path d="M8 0c4 0 6 3 6 6v5l2 4H0l2-4V6c0-3 2-6 6-6zM5 16h6q-1 3-3 3t-3-3z" fill="#063f97" /></svg>
        <div className="relative ml-[22px] h-[29px] w-[31px]">
          <svg width="29" height="24" viewBox="0 0 29 24">
            <defs>
              <linearGradient id="c1" x1="0" y1="0" x2="0" y2="1"><stop offset="0" stopColor="#18a0ec" /><stop offset=".6" stopColor="#4cb848" /><stop offset="1" stopColor="#e8c52a" /></linearGradient>
              <linearGradient id="c2" x1="1" y1="0" x2="0" y2="1"><stop offset="0" stopColor="#a45cf0" /><stop offset="1" stopColor="#f0607a" /></linearGradient>
            </defs>
            <path d="M8 1h11q3 0 4 5h-6q-2 0-3 4l-2 7q-1 2-4 2H3q-4 0-3-5L3 5q1-4 5-4z" fill="url(#c1)" /><path d="M14 1h5q3 0 4 5h-6z" fill="#1c4fd0" />
            <path d="M18 7h7q5 0 3.500 6L26 20q-1 3-4 3H12q2-1 3-5l2-8q0-3 1-3z" fill="url(#c2)" />
          </svg>
          <div className="absolute left-[7px] top-[19px] rounded-[2px] bg-[#ffc500] px-[3px] text-[8px] font-black leading-[9px] tracking-[0.300px] text-black">PRE</div>
        </div>
      </div>
    </div>
  );
}

export default function App() {
  return (
    <div className="flex h-[1080px] w-[1920px] flex-col overflow-hidden bg-white font-['Open_Sans','Noto_Sans',sans-serif]">
      <TabStrip />
      <AddressBar />
      <div className="flex min-h-0 flex-1 flex-col font-['Roboto',sans-serif]">
        <AppHeader />
        <Ribbon />
        <div className="flex min-h-0 flex-1">
          <Sidebar />
          <div className="flex flex-1 flex-col"><PageBar /><Canvas /></div>
        </div>
      </div>
      <Taskbar />
    </div>
  );
}
